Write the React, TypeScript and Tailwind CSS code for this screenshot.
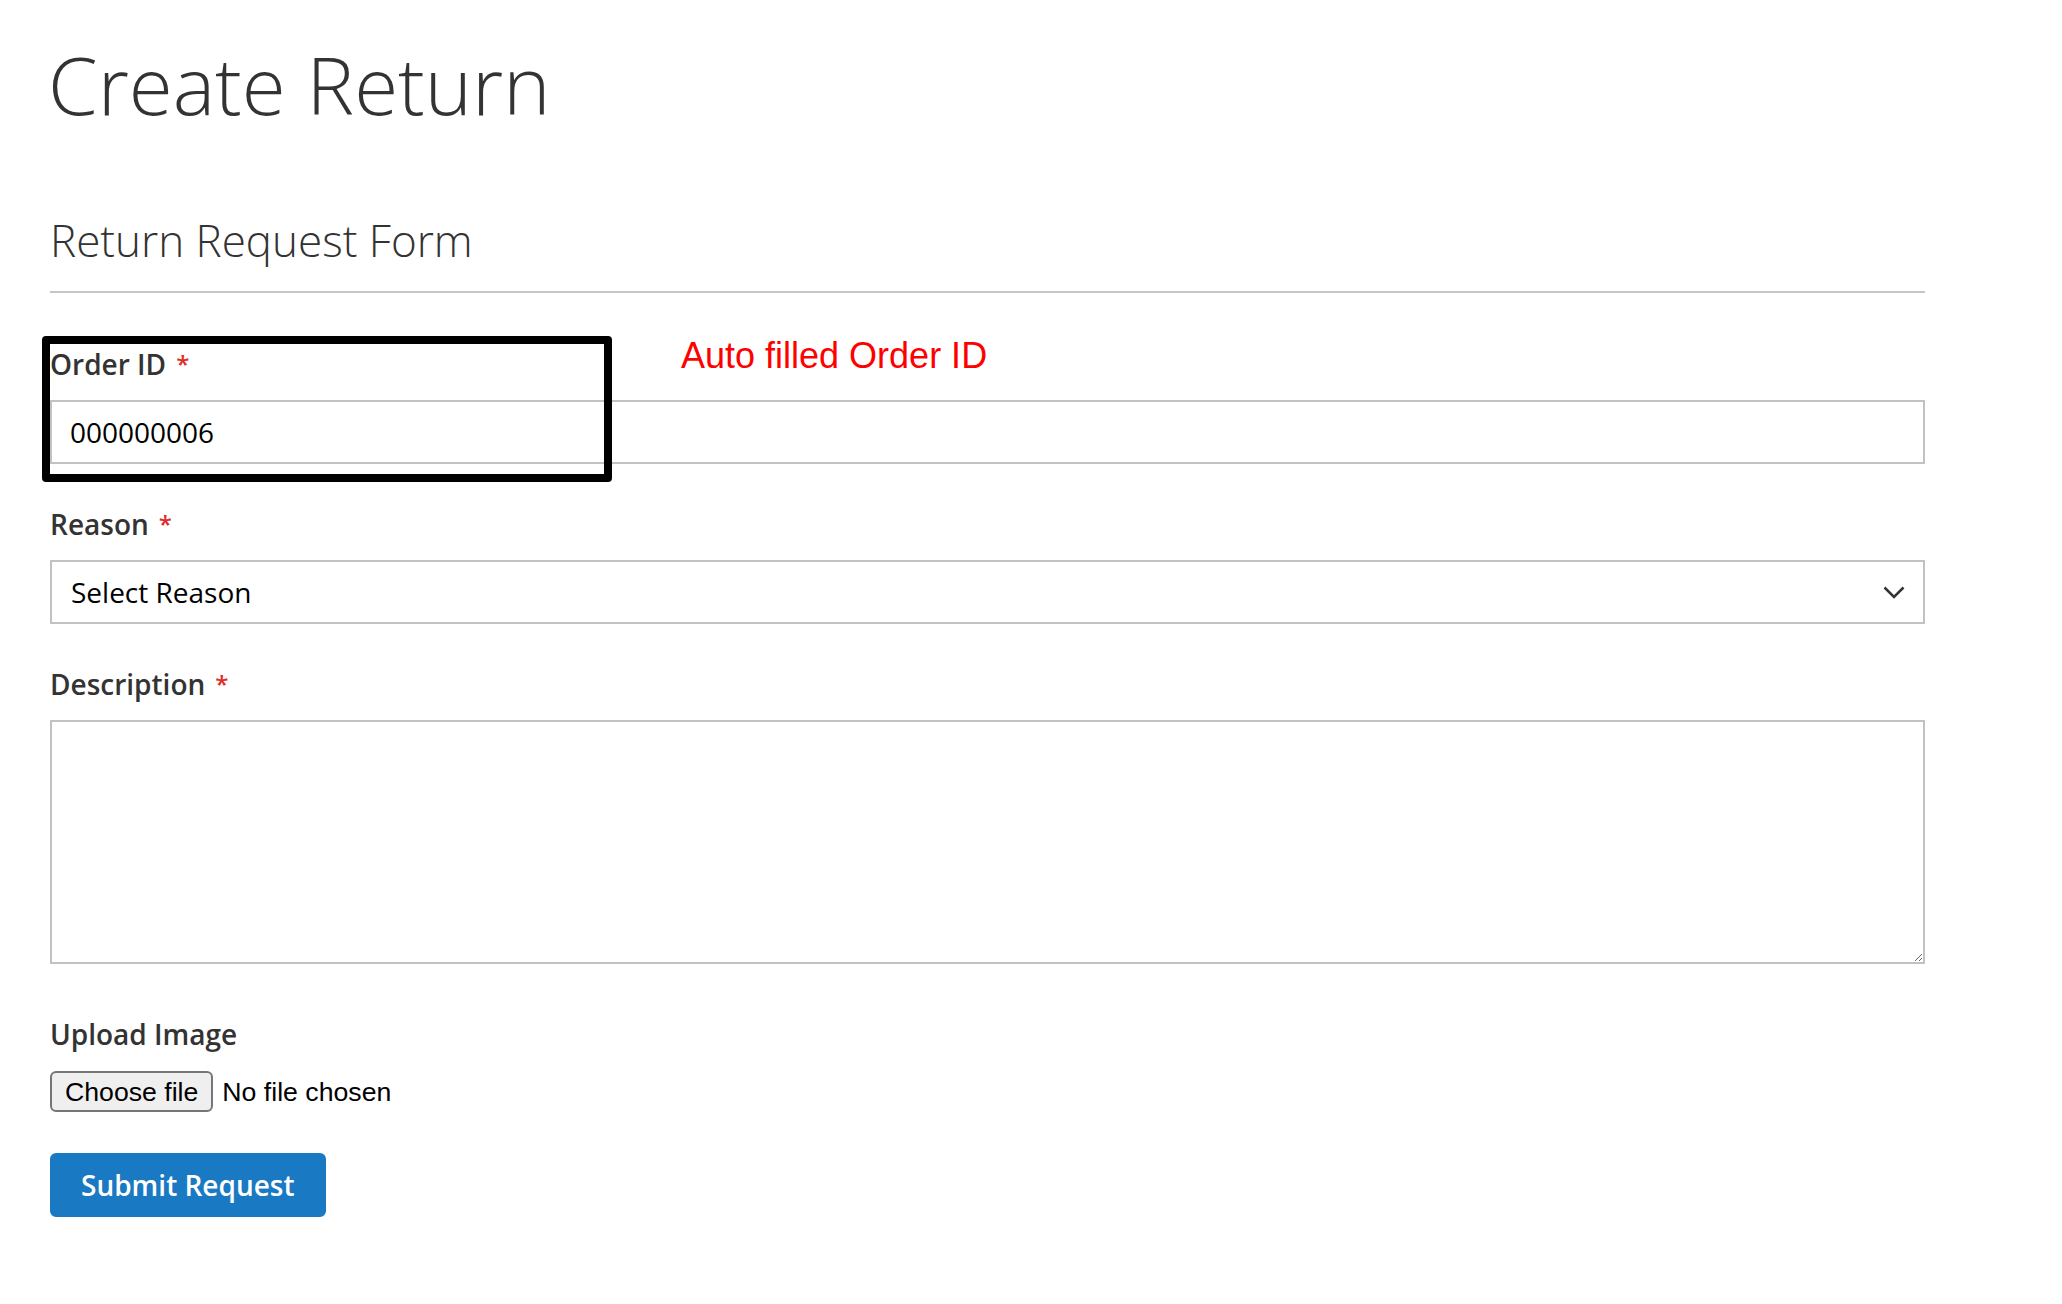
import React from "react";

export default function App() {
  return (
    <div className="min-h-screen bg-white text-[#333]" style={{ fontFamily: '"Open Sans", "Noto Sans", sans-serif' }}>
      <div className="ml-[50px] w-[1875px] pt-[40px]">
        <h1 className="text-[80px] leading-[88px] font-light text-[#333] -ml-[2px]">Create Return</h1>

        <div className="mt-[86px] border-b-2 border-[#c6c6c6] pb-[24px] text-[44px] leading-[53px] font-light text-[#333]">
          Return Request Form
        </div>

        <div className="relative mt-[51px] mb-[40px]">
          <div className="flex text-[28px] leading-[40px] font-semibold text-[#333] mb-[16px]">
            <span>Order ID</span>
            <span className="ml-[10px] text-[24px] text-[#e02b27]">*</span>
          </div>
          <input
            type="text"
            defaultValue="000000006"
            readOnly
            className="block w-full h-[64px] border-2 border-[#c2c2c2] bg-white px-[18px] text-[28px] text-black outline-none"
          />
          <div className="absolute -left-[8px] -top-[8px] w-[570px] h-[146px] border-[8px] border-black rounded-[4px] pointer-events-none" />
          <div
            className="absolute left-[631px] -top-[8px] text-[36px] leading-[40px] text-[#ff0000]"
            style={{ fontFamily: '"Liberation Sans", Arial, sans-serif' }}
          >
            Auto filled Order ID
          </div>
        </div>

        <div className="mb-[40px]">
          <div className="flex text-[28px] leading-[40px] font-semibold text-[#333] mb-[16px]">
            <span>Reason</span>
            <span className="ml-[10px] text-[24px] text-[#e02b27]">*</span>
          </div>
          <div className="relative">
            <select className="block w-full h-[64px] appearance-none border-2 border-[#c2c2c2] bg-white pl-[19px] pr-[50px] text-[28px] text-black outline-none">
              <option>Select Reason</option>
            </select>
            <svg
              className="absolute right-[20px] top-[26px] pointer-events-none"
              width="22"
              height="13"
              viewBox="0 0 22 13"
              fill="none"
            >
              <path d="M1.5 1.5 L11 11 L20.5 1.5" stroke="#333" strokeWidth="2.5" />
            </svg>
          </div>
        </div>

        <div>
          <div className="flex text-[28px] leading-[40px] font-semibold text-[#333] mb-[16px]">
            <span>Description</span>
            <span className="ml-[10px] text-[24px] text-[#e02b27]">*</span>
          </div>
          <textarea className="block w-full h-[244px] border-2 border-[#c2c2c2] bg-white px-[18px] py-[10px] text-[28px] text-black outline-none" />
        </div>

        <div className="mt-[50px]">
          <div className="text-[28px] leading-[40px] font-semibold text-[#333]">Upload Image</div>
          <div
            className="mt-[17px] flex items-center text-[26.67px] text-black"
            style={{ fontFamily: '"Liberation Sans", Arial, sans-serif' }}
          >
            <button className="h-[41px] rounded-[6px] border-2 border-[#767676] bg-[#efefef] px-[13px] leading-[30px] text-black">
              Choose file
            </button>
            <span className="ml-[9px]">No file chosen</span>
          </div>
        </div>

        <button className="mt-[41px] h-[64px] rounded-[6px] border-2 border-[#1979c3] bg-[#1979c3] px-[29px] text-[28px] leading-[32px] font-semibold text-white">
          Submit Request
        </button>
      </div>
    </div>
  );
}
